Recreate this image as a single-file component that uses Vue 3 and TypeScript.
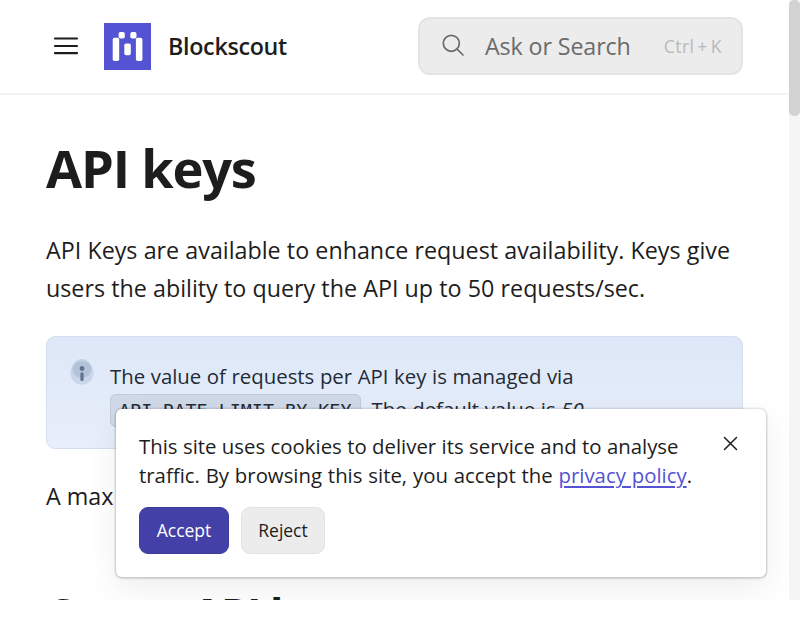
<script setup lang="ts">
interface CookieAction {
  label: string
  kind: 'primary' | 'secondary'
}

const actions: CookieAction[] = [
  { label: 'Accept', kind: 'primary' },
  { label: 'Reject', kind: 'secondary' },
]
</script>

<template>
  <div class="viewport">
    <div class="page">
      <header class="header">
        <button class="menu" aria-label="Menu">
          <svg width="26" height="20" viewBox="0 0 26 20" fill="none" stroke="#1d1d1d" stroke-width="2.2" stroke-linecap="round">
            <path d="M2 2.5H24M2 10H24M2 17.2H24" />
          </svg>
        </button>
        <a class="brand">
          <svg class="logo" width="47" height="47" viewBox="0 0 47 47">
            <rect width="47" height="47" fill="#5353d3" />
            <g fill="#fff">
              <rect x="8.7" y="14.8" width="6.5" height="23.2" rx="1.8" />
              <rect x="31.9" y="14.8" width="6.5" height="23.2" rx="1.8" />
              <rect x="14.6" y="9.1" width="6.2" height="6.4" rx="1.8" />
              <rect x="26.3" y="9.1" width="6.2" height="6.4" rx="1.8" />
              <rect x="20.3" y="20.4" width="6.5" height="11.8" rx="1.8" />
            </g>
          </svg>
          <span class="name">Blockscout</span>
        </a>
        <div class="search">
          <svg width="24" height="24" viewBox="0 0 24 24" fill="none" stroke="#6b6b6b" stroke-width="1.7">
            <circle cx="9.3" cy="9.3" r="8" />
            <path d="M15 15L21 21" stroke-linecap="round" />
          </svg>
          <span class="placeholder">Ask or Search</span>
          <span class="keys"><span>Ctrl</span><span>+</span><span>K</span></span>
        </div>
      </header>
      <main class="content">
        <h1>API keys</h1>
        <p class="lead">API Keys are available to enhance request availability. Keys give users the ability to query the API up to 50 requests/sec.</p>
        <div class="hint">
          <svg class="info" width="24" height="28" viewBox="0 0 24 28">
            <circle cx="12" cy="15" r="11.6" fill="#7890b0" fill-opacity=".22" />
            <ellipse cx="12" cy="10.5" rx="9.6" ry="9.5" fill="#7890b0" fill-opacity=".28" />
            <circle cx="12" cy="10.5" r="2.4" fill="#5f7290" />
            <path d="M12 15.8V21.4" stroke="#5f7290" stroke-width="3.2" stroke-linecap="round" />
          </svg>
          <p>The value of requests per API key is managed via <code>API_RATE_LIMIT_BY_KEY</code>. The default value is <em>50</em></p>
        </div>
        <p class="after">A max</p>
        <h2>Create API keys</h2>
      </main>
    </div>
    <div class="track"><div class="thumb"></div></div>
    <section class="cookies">
      <div class="message">
        <p>This site uses cookies to deliver its service and to analyse <span class="accept-note">traffic. By browsing this site, you accept the <a>privacy policy</a>.</span></p>
        <button class="close" aria-label="Close">
          <svg width="15" height="15" viewBox="0 0 15 15" fill="none" stroke="#1d1d1d" stroke-width="1.5" stroke-linecap="round">
            <path d="M1.5 1.5L13.5 13.5M13.5 1.5L1.5 13.5" />
          </svg>
        </button>
      </div>
      <div class="actions">
        <button v-for="a in actions" :key="a.label" class="btn" :class="a.kind">{{ a.label }}</button>
      </div>
    </section>
  </div>
</template>

<style>
body { background: #fff; overflow: hidden; }
</style>

<style scoped>
* { box-sizing: border-box; }
.viewport {
  position: relative;
  display: flex;
  width: 800px;
  height: 600px;
  overflow: hidden;
  background: #fff;
  color: #1d1d1d;
  font-family: "Open Sans", "Noto Sans", sans-serif;
  font-size: 23.27px;
}
.page { flex: 1; min-width: 0; }
h1, h2, p { margin: 0; }
button { padding: 0; border: 0; background: none; font: inherit; color: inherit; }
.header {
  display: flex;
  align-items: center;
  height: 95px;
  padding: 0 46px 0 53px;
  border-bottom: 2px solid #f3f3f3;
}
.menu { display: flex; width: 51px; padding-bottom: 1px; }
.brand { display: flex; align-items: center; gap: 17px; }
.logo { display: block; }
.name { padding-bottom: 2px; font-weight: 600; line-height: 32px; letter-spacing: -.3px; }
.search {
  display: flex;
  align-items: center;
  width: 325px;
  height: 58px;
  margin: 0 0 1px auto;
  padding: 0 19px 0 22px;
  border: 2px solid #e4e4e4;
  border-radius: 12px;
  background: #ececec;
}
.placeholder { flex: 1; margin-left: 19px; color: #6b6b6b; letter-spacing: -.12px; white-space: nowrap; }
.keys { display: flex; gap: 3px; color: #b9b9b9; font-size: 17.5px; letter-spacing: .45px; }
.content { padding: 40px 46px 0; }
h1 { font-size: 52.4px; line-height: 65px; font-weight: 700; letter-spacing: -1.2px; }
.lead { margin-top: 32px; line-height: 37.8px; word-spacing: .15px; }
.hint {
  display: flex;
  gap: 16px;
  height: 113px;
  margin-top: 28px;
  padding: 21px 23px;
  border: 1px solid #d5dfee;
  border-radius: 9px;
  background: linear-gradient(#dde7f7, #e8effb);
  color: #232b36;
  font-size: 20.36px;
  line-height: 33px;
  word-spacing: .3px;
}
.info { flex: none; }
.hint p { flex: 1; padding-top: 2px; }
.hint code {
  padding: 5px 8px;
  border: 1px solid #c2cbda;
  border-radius: 6px;
  background: #d0d9e7;
  font-family: "DejaVu Sans Mono", monospace;
  font-size: 18.4px;
}
.after { margin-top: 29px; line-height: 37.8px; }
h2 { margin-top: 71px; font-size: 43.6px; line-height: 54px; font-weight: 700; letter-spacing: -1.35px; }
.track { width: 11px; background: #f5f5f5; }
.thumb { height: 116px; border-radius: 5px; background: #d2d2d2; }
.cookies {
  position: absolute;
  left: 116px;
  top: 409px;
  width: 650px;
  height: 168px;
  padding: 23px;
  border-radius: 6px;
  background: #fff;
  box-shadow: 0 0 0 1.5px rgba(0, 0, 0, .07), 0 1px 2px 1px rgba(0, 0, 0, .1), 0 12px 34px rgba(0, 0, 0, .07);
  font-size: 20.36px;
  line-height: 29px;
}
.message { display: flex; justify-content: space-between; }
.message p { width: 570px; word-spacing: .1px; }
.accept-note { word-spacing: .55px; }
.message a { color: #5353d3; text-decoration: underline; text-decoration-thickness: 2px; text-underline-offset: 3px; }
.close { display: flex; width: 20px; height: 20px; margin-top: 4px; }
.actions { display: flex; gap: 12px; margin-top: 17px; }
.btn { height: 47px; border: 1.5px solid #e2e2e2; border-radius: 9px; font-size: 17.5px; }
.primary { width: 90px; border-color: #3c3c9c; background: #4341a8; color: #fff; }
.secondary { width: 84px; background: #ececec; }
</style>
